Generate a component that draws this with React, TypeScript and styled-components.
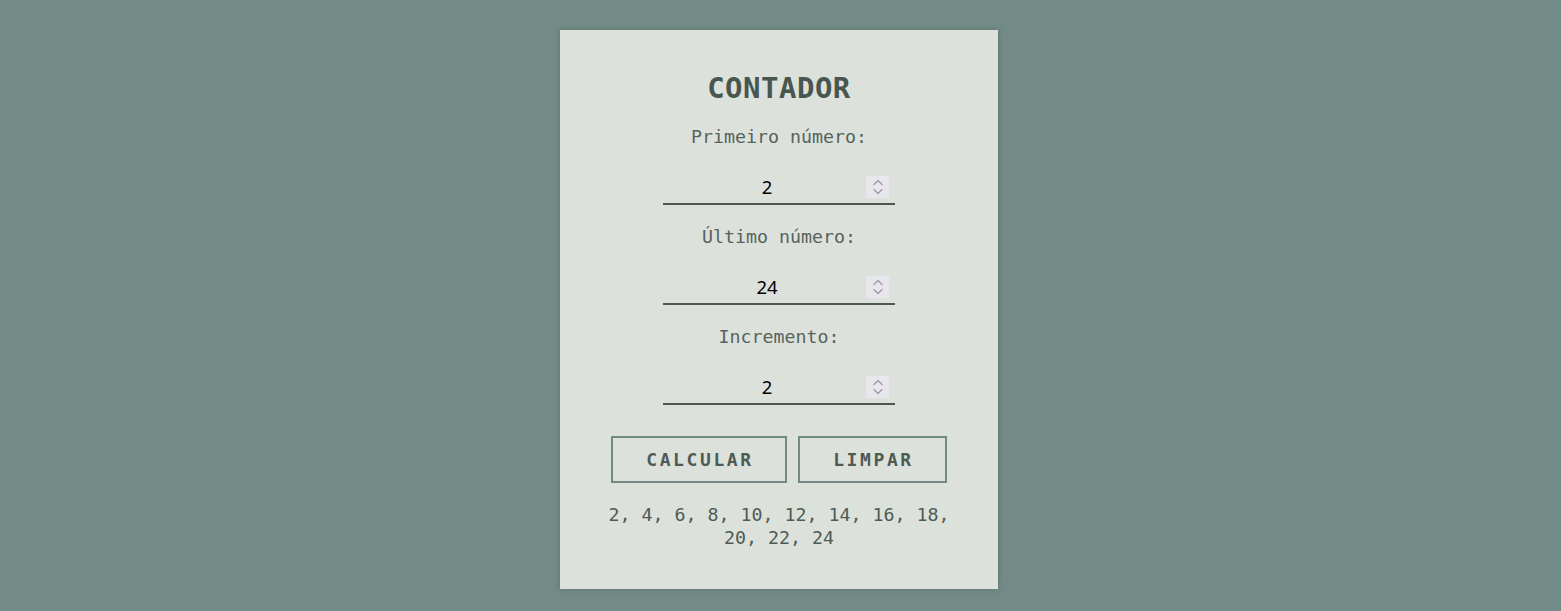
import React, { useState } from "react";
import styled, { createGlobalStyle } from "styled-components";

const Global = createGlobalStyle`
  html, body { margin: 0; padding: 0; }
  body {
    background: #728b86;
    font-family: "DejaVu Sans Mono", "Liberation Mono", monospace;
  }
`;

const Page = styled.div`
  display: flex;
  justify-content: center;
  padding-top: 30px;
  padding-right: 3px;
  min-height: 611px;
  box-sizing: border-box;
`;

const Card = styled.main`
  width: 438px;
  height: 559px;
  box-sizing: border-box;
  background: #dde1dc;
  box-shadow: 0 0 6px rgba(0, 0, 0, 0.18);
  display: flex;
  flex-direction: column;
  align-items: center;
  padding-top: 41px;
`;

const Title = styled.h1`
  margin: 0;
  font-size: 29px;
  line-height: 34px;
  font-weight: bold;
  color: #47574f;
  letter-spacing: 0.5px;
`;

const Field = styled.div`
  display: flex;
  flex-direction: column;
  align-items: center;
  margin-top: 20px;
`;

const Label = styled.label`
  font-size: 18.3px;
  line-height: 24px;
  color: #56645d;
`;

const InputWrap = styled.div`
  position: relative;
  margin-top: 26px;
  width: 232px;
  height: 30px;
`;

const NumberInput = styled.input`
  display: block;
  width: 100%;
  height: 30px;
  box-sizing: border-box;
  border: none;
  border-bottom: 2px solid #4b5750;
  background: transparent;
  text-align: center;
  font-family: "Noto Sans", "Open Sans", sans-serif;
  font-size: 18.5px;
  color: #000;
  padding: 0 28px 5px 4px;
  outline: none;
  -moz-appearance: textfield;
  &::-webkit-inner-spin-button,
  &::-webkit-outer-spin-button {
    -webkit-appearance: none;
    margin: 0;
  }
`;

const Spinner = styled.div`
  position: absolute;
  left: 203px;
  top: 1px;
  width: 23px;
  height: 22px;
  background: #e9e7ee;
  display: flex;
  align-items: center;
  justify-content: center;
  pointer-events: none;
`;

const Buttons = styled.div`
  display: flex;
  gap: 11px;
  margin-top: 31px;
`;

const Button = styled.button<{ $w: number }>`
  width: ${(p) => p.$w}px;
  height: 47px;
  box-sizing: border-box;
  background: transparent;
  border: 2px solid #718a85;
  font-family: "DejaVu Sans Mono", monospace;
  font-weight: bold;
  font-size: 18px;
  letter-spacing: 2.6px;
  padding: 0 0 0 2px;
  color: #4e5b55;
  cursor: pointer;
`;

const Result = styled.p`
  margin: 20px 0 0;
  width: 360px;
  text-align: center;
  font-size: 18.3px;
  line-height: 23px;
  color: #4e5b55;
`;

const SpinIcon = () => (
  <svg width="12" height="18" viewBox="0 0 12 18" fill="none" stroke="#9e99a6" strokeWidth="1.3" strokeLinecap="round" strokeLinejoin="round">
    <path d="M2 6.5 L6 2.5 L10 6.5" />
    <path d="M2 11.5 L6 15.5 L10 11.5" />
  </svg>
);

function NumberField({ label, value, onChange }: { label: string; value: string; onChange: (v: string) => void }) {
  return (
    <Field>
      <Label>{label}</Label>
      <InputWrap>
        <NumberInput type="number" value={value} onChange={(e) => onChange(e.target.value)} />
        <Spinner>
          <SpinIcon />
        </Spinner>
      </InputWrap>
    </Field>
  );
}

export default function App() {
  const [a, setA] = useState("2");
  const [b, setB] = useState("24");
  const [c, setC] = useState("2");
  return (
    <>
      <Global />
      <Page>
        <Card>
          <Title>CONTADOR</Title>
          <NumberField label="Primeiro número:" value={a} onChange={setA} />
          <NumberField label="Último número:" value={b} onChange={setB} />
          <NumberField label="Incremento:" value={c} onChange={setC} />
          <Buttons>
            <Button $w={176}>CALCULAR</Button>
            <Button $w={149}>LIMPAR</Button>
          </Buttons>
          <Result>2, 4, 6, 8, 10, 12, 14, 16, 18, 20, 22, 24</Result>
        </Card>
      </Page>
    </>
  );
}
